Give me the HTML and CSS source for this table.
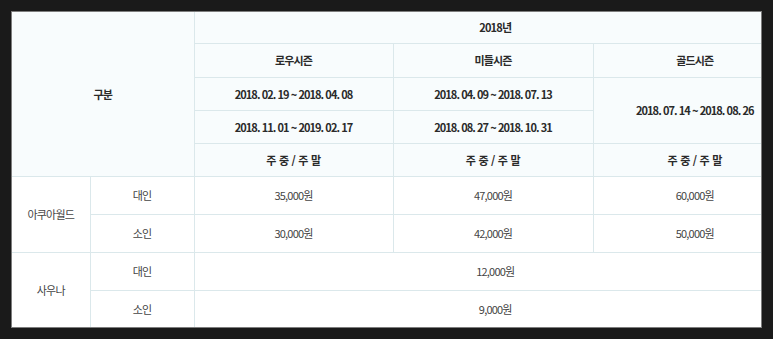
FILE: index.html
```html
<!DOCTYPE html>
<html lang="ko">
<head>
<meta charset="utf-8">
<link rel="stylesheet" href="styles.css">
</head>
<body>
<div class="frame">
<table class="price">
  <colgroup>
    <col class="c1"><col class="c2"><col class="c3"><col class="c4"><col class="c5">
  </colgroup>
  <thead>
    <tr class="h1">
      <th colspan="2" rowspan="5" class="gubun">구분</th>
      <th colspan="3">2018년</th>
    </tr>
    <tr class="h2">
      <th>로우시즌</th>
      <th>미들시즌</th>
      <th>골드시즌</th>
    </tr>
    <tr class="h3">
      <th class="date">2018. 02. 19 ~ 2018. 04. 08</th>
      <th class="date">2018. 04. 09 ~ 2018. 07. 13</th>
      <th class="date" rowspan="2">2018. 07. 14 ~ 2018. 08. 26</th>
    </tr>
    <tr class="h4">
      <th class="date">2018. 11. 01 ~ 2019. 02. 17</th>
      <th class="date">2018. 08. 27 ~ 2018. 10. 31</th>
    </tr>
    <tr class="h5">
      <th class="week">주 중 / 주 말</th>
      <th class="week">주 중 / 주 말</th>
      <th class="week">주 중 / 주 말</th>
    </tr>
  </thead>
  <tbody>
    <tr>
      <td rowspan="2" class="cat">아쿠아월드</td>
      <td>대인</td>
      <td>35,000원</td>
      <td>47,000원</td>
      <td>60,000원</td>
    </tr>
    <tr>
      <td>소인</td>
      <td>30,000원</td>
      <td>42,000원</td>
      <td>50,000원</td>
    </tr>
    <tr>
      <td rowspan="2" class="cat">사우나</td>
      <td>대인</td>
      <td colspan="3">12,000원</td>
    </tr>
    <tr class="last">
      <td>소인</td>
      <td colspan="3">9,000원</td>
    </tr>
  </tbody>
</table>
</div>
</body>
</html>
```

FILE: styles.css
```css
html, body {
  margin: 0;
  padding: 0;
}
body {
  background: #1a1a1a;
  padding: 11px 11px 0 11px;
  font-family: "Noto Sans CJK KR", "Noto Sans", sans-serif;
}
.frame {
  width: 749px;
  border: 1px solid #7d7d7d;
  overflow: hidden;
  background: #ffffff;
}
.price {
  width: 784px;
  table-layout: fixed;
  border-collapse: collapse;
  border-style: hidden;
  background: #ffffff;
  font-size: 11px;
  letter-spacing: -0.8px;
}
.c1 { width: 78px; }
.c2 { width: 104px; }
.c3 { width: 199px; }
.c4 { width: 200px; }
.c5 { width: 203px; }
.price th,
.price td {
  border: 1px solid #dbe8eb;
  text-align: center;
  vertical-align: middle;
  padding: 0;
  line-height: 14px;
}
.price th {
  background: #f8fcfd;
  color: #2a2a2a;
  font-weight: bold;
}
.price td {
  color: #444;
  font-weight: normal;
}
.h1 { height: 31px; }
.h2 { height: 34px; }
.h3 { height: 33px; }
.h4 { height: 33px; }
.h5 { height: 33px; }
.price tbody tr { height: 38px; }
.price tbody tr.last { height: 37px; }
.price .date {
  letter-spacing: -0.95px;
}
.price .week {
  letter-spacing: -0.3px;
}
```
